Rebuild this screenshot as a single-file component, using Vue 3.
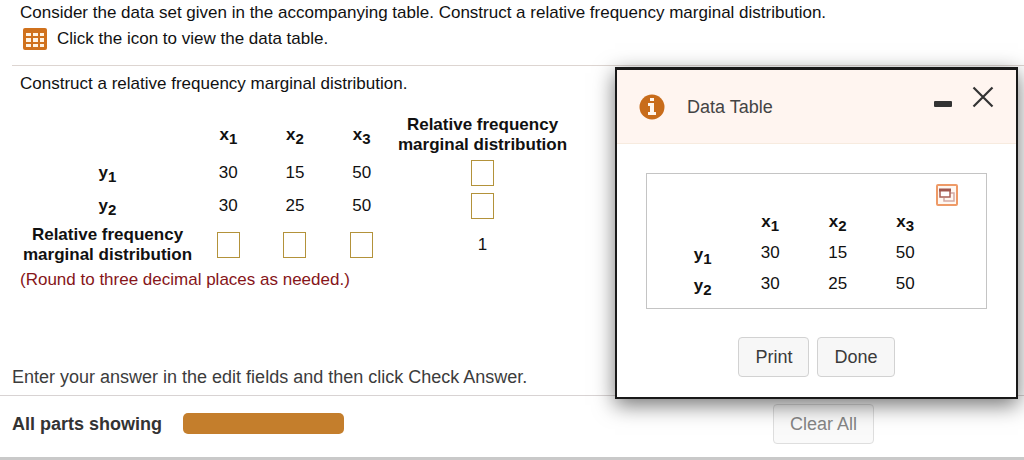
<script setup>
import { ref } from 'vue'

const columns = [1, 2, 3]
const rows = [
  { id: 1, values: [30, 15, 50] },
  { id: 2, values: [30, 25, 50] },
]
const rowAnswers = ref(['', ''])
const columnAnswers = ref(['', '', ''])

function clearAll() {
  rowAnswers.value = ['', '']
  columnAnswers.value = ['', '', '']
}
</script>

<template>
  <div class="page">
    <main class="exercise">
      <header class="prompt">
        <p>Consider the data set given in the accompanying table. Construct a relative frequency marginal distribution.</p>
        <p class="prompt-link">
          <button type="button" class="icon-button" aria-label="View the data table">
            <svg width="24" height="22" viewBox="0 0 24 22">
              <rect width="24" height="22" rx="2" fill="#d0711c" />
              <g fill="#fff4e4">
                <rect x="3" y="5" width="5" height="3" /><rect x="10" y="5" width="5" height="3" /><rect x="17" y="5" width="4" height="3" />
                <rect x="3" y="10" width="5" height="4" /><rect x="10" y="10" width="5" height="4" /><rect x="17" y="10" width="4" height="4" />
                <rect x="3" y="16" width="5" height="3" /><rect x="10" y="16" width="5" height="3" /><rect x="17" y="16" width="4" height="3" />
              </g>
            </svg>
          </button>
          <span>Click the icon to view the data table.</span>
        </p>
      </header>

      <section class="work">
        <p>Construct a relative frequency marginal distribution.</p>
        <table class="answers">
          <colgroup>
            <col class="c-label" /><col class="c-x" /><col class="c-x" /><col class="c-x" /><col class="c-total" />
          </colgroup>
          <thead>
            <tr>
              <td></td>
              <th v-for="c in columns" :key="c" scope="col">x<sub>{{ c }}</sub></th>
              <th scope="col">Relative frequency<br />marginal distribution</th>
            </tr>
          </thead>
          <tbody>
            <tr v-for="(row, i) in rows" :key="row.id">
              <th scope="row">y<sub>{{ row.id }}</sub></th>
              <td v-for="(v, j) in row.values" :key="j">{{ v }}</td>
              <td><input v-model="rowAnswers[i]" type="text" :aria-label="`Marginal distribution of y${row.id}`" /></td>
            </tr>
          </tbody>
          <tfoot>
            <tr>
              <th scope="row">Relative frequency<br />marginal distribution</th>
              <td v-for="(c, j) in columns" :key="c"><input v-model="columnAnswers[j]" type="text" :aria-label="`Marginal distribution of x${c}`" /></td>
              <td>1</td>
            </tr>
          </tfoot>
        </table>
        <p class="note">(Round to three decimal places as needed.)</p>
      </section>
    </main>

    <p class="hint">Enter your answer in the edit fields and then click Check Answer.</p>

    <footer class="footer">
      <strong>All parts showing</strong>
      <div class="progress" role="progressbar" aria-label="Parts showing" aria-valuenow="100"></div>
      <button type="button" class="button clear" @click="clearAll">Clear All</button>
    </footer>

    <div class="dialog" role="dialog" aria-labelledby="dialog-title">
      <header class="dialog-head">
        <svg width="26" height="26" viewBox="0 0 26 26" aria-hidden="true">
          <circle cx="13" cy="13" r="12.5" fill="#c86c1b" />
          <path d="M11 4h4v3h-4zM9 9h6v9h2v3H9v-3h2v-6H9z" fill="#fff6ef" />
        </svg>
        <h2 id="dialog-title">Data Table</h2>
        <button type="button" class="icon-button" aria-label="Minimize">
          <svg width="18" height="22" viewBox="0 0 18 22"><rect y="15" width="18" height="6" rx="1" fill="#333" /></svg>
        </button>
        <button type="button" class="icon-button" aria-label="Close">
          <svg width="22" height="22" viewBox="0 0 22 22"><path d="M1.500 1.500L20.500 20.500M20.500 1.500L1.500 20.500" stroke="#333" stroke-width="2.200" /></svg>
        </button>
      </header>

      <div class="data-frame">
        <button type="button" class="icon-button popout" aria-label="Open table in a new window">
          <svg width="22" height="22" viewBox="0 0 22 22" fill="none">
            <rect x="1" y="1" width="20" height="20" rx="1" fill="#fff8f2" stroke="#ee9a67" stroke-width="2" />
            <path d="M14 9h4v8H8v-3" stroke="#d3a9a4" stroke-width="1.500" />
            <rect x="4" y="6" width="10" height="7" fill="#fff" stroke="#a85f55" stroke-width="1.500" />
            <path d="M3 6h12" stroke="#a0584f" stroke-width="3" />
          </svg>
        </button>
        <table class="data">
          <thead>
            <tr>
              <td></td>
              <th v-for="c in columns" :key="c" scope="col">x<sub>{{ c }}</sub></th>
            </tr>
          </thead>
          <tbody>
            <tr v-for="row in rows" :key="row.id">
              <th scope="row">y<sub>{{ row.id }}</sub></th>
              <td v-for="(v, j) in row.values" :key="j">{{ v }}</td>
            </tr>
          </tbody>
        </table>
      </div>

      <div class="dialog-actions">
        <button type="button" class="button">Print</button>
        <button type="button" class="button">Done</button>
      </div>
    </div>
  </div>
</template>

<style>
body {
  margin: 0;
  background: #fff;
}
</style>

<style scoped>
* {
  box-sizing: border-box;
}
.page {
  position: relative;
  display: flex;
  flex-direction: column;
  min-height: 100vh;
  overflow: hidden;
  font-family: "Liberation Sans", Arial, sans-serif;
  font-size: 17px;
  line-height: 20px;
  color: #111;
}
p,
h2 {
  margin: 0;
}
.exercise {
  flex: 1;
  padding-left: 12px;
}
.prompt {
  padding: 3px 0 15px 8px;
  border-bottom: 1px solid #ddd5d1;
  white-space: nowrap;
}
.prompt-link {
  display: flex;
  align-items: center;
  gap: 10px;
  margin-top: 5px;
  padding-left: 3px;
}
.icon-button {
  display: block;
  flex: none;
  padding: 0;
  border: 0;
  background: none;
}
.icon-button svg {
  display: block;
}
.work {
  padding: 8px 0 0 8px;
}
table {
  border-collapse: collapse;
  table-layout: fixed;
}
th,
td {
  padding: 0;
  text-align: center;
  vertical-align: middle;
  white-space: nowrap;
}
sub {
  font-size: 15px;
  line-height: 0;
  vertical-align: -4px;
}
.answers {
  width: 550px;
  margin-top: 19px;
}
.c-label,
.c-total {
  width: 175px;
}
.answers tr {
  height: 33px;
}
.answers thead tr {
  height: 43px;
}
.answers tfoot tr {
  height: 45px;
}
.answers input {
  display: block;
  width: 23px;
  height: 26px;
  margin: 0 auto;
  padding: 0 2px;
  border: 1px solid #b3923a;
  background: #fff;
  font: inherit;
  font-size: 14px;
}
.note {
  margin-top: 3px;
  color: #861519;
}
.hint {
  padding: 0 12px 8px;
  border-bottom: 1px solid #d8d3d3;
  font-size: 18px;
  color: #3c3c3c;
}
.footer {
  display: flex;
  align-items: center;
  gap: 21px;
  height: 64px;
  padding: 0 150px 6px 12px;
  border-bottom: 3px solid #c9c9c9;
  font-size: 18px;
  color: #333;
}
.progress {
  width: 161px;
  height: 21px;
  border-radius: 5px;
  background: #c47e2c;
}
.button {
  height: 40px;
  padding: 0 16px;
  border: 1px solid #d2d2d2;
  border-radius: 4px;
  background: #f7f7f7;
  font: inherit;
  font-size: 18px;
  color: #3a3a3a;
}
.clear {
  margin-left: auto;
  border-color: #dedede;
  background: #fafafa;
  color: #858585;
}
.dialog {
  position: absolute;
  top: 67px;
  right: 6px;
  width: 403px;
  padding-bottom: 20px;
  border: 2px solid #191919;
  border-top-width: 3px;
  background: #fff;
  box-shadow: 0 6px 20px rgba(0, 0, 0, 0.55);
}
.dialog-head {
  display: flex;
  align-items: center;
  height: 74px;
  padding: 0 22px;
  border-bottom: 1px solid #f7ebdf;
  background: #fff5f0;
}
.dialog-head h2 {
  flex: 1;
  margin-left: 22px;
  font-size: 18px;
  font-weight: 400;
  color: #444;
}
.dialog-head .icon-button {
  margin: 0 0 20px 20px;
}
.data-frame {
  margin: 29px 29px 28px;
  padding: 10px 28px 9px 22px;
  border: 1px solid #c4c4c4;
}
.popout {
  margin-left: auto;
}
.data {
  width: 270px;
}
.data tr {
  height: 31px;
}
.data tbody th {
  padding-top: 4px;
}
.dialog-actions {
  display: flex;
  justify-content: center;
  gap: 8px;
}
</style>
